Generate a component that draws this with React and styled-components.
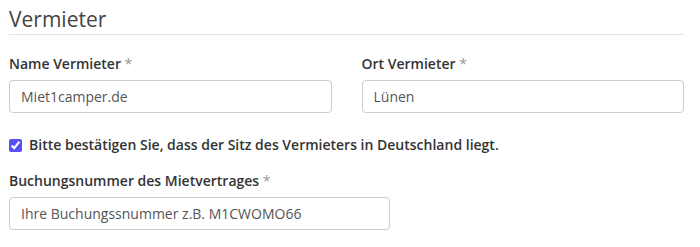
import React from 'react';
import styled, { createGlobalStyle } from 'styled-components';

const GlobalStyle = createGlobalStyle`
  body {
    margin: 0;
    background: #fff;
    font-family: "Open Sans", "Noto Sans", sans-serif;
  }
`;

const Section = styled.section`
  padding: 5px 16px 0 9px;
  width: 675px;
`;

const SectionTitle = styled.h2`
  border-bottom: 1px solid #e3e3e3;
  color: #444;
  font-size: 21px;
  font-weight: 400;
  line-height: 28px;
  margin: 0 0 19px 0;
  padding-bottom: 1px;
`;

const Row = styled.div`
  display: grid;
  grid-template-columns: ${props => props.$cols || '1fr'};
  column-gap: 30px;
`;

const Field = styled.div`
  display: flex;
  flex-direction: column;
`;

const Label = styled.label`
  color: #333;
  font-size: 14px;
  font-weight: 600;
  line-height: 20px;
  margin-bottom: 6px;

  span {
    color: #999;
    font-weight: 400;
  }
`;

const Input = styled.input`
  border: 1px solid #ccc;
  border-radius: 4px;
  box-sizing: border-box;
  color: #555;
  font-family: inherit;
  font-size: 14px;
  height: 33px;
  outline: none;
  padding: 0 11px;
  width: ${props => props.$width || '100%'};

  &::placeholder {
    color: #555;
  }
`;

const CheckRow = styled.label`
  align-items: center;
  color: #333;
  display: flex;
  font-size: 14px;
  font-weight: 600;
  gap: 7px;
  line-height: 20px;
  margin: 22px 0 16px 0;

  input {
    accent-color: #5a4ff2;
    height: 13px;
    margin: 0;
    width: 13px;
  }
`;

const App = () => (
  <>
    <GlobalStyle />
    <Section>
      <SectionTitle>Vermieter</SectionTitle>
      <Row $cols="1fr 1fr">
        <Field>
          <Label>Name Vermieter <span>*</span></Label>
          <Input defaultValue="Miet1camper.de" />
        </Field>
        <Field>
          <Label>Ort Vermieter <span>*</span></Label>
          <Input defaultValue="Lünen" />
        </Field>
      </Row>
      <CheckRow>
        <input type="checkbox" defaultChecked />
        Bitte bestätigen Sie, dass der Sitz des Vermieters in Deutschland liegt.
      </CheckRow>
      <Field>
        <Label>Buchungsnummer des Mietvertrages <span>*</span></Label>
        <Input $width="381px" placeholder="Ihre Buchungssnummer z.B. M1CWOMO66" />
      </Field>
    </Section>
  </>
);

export default App;
